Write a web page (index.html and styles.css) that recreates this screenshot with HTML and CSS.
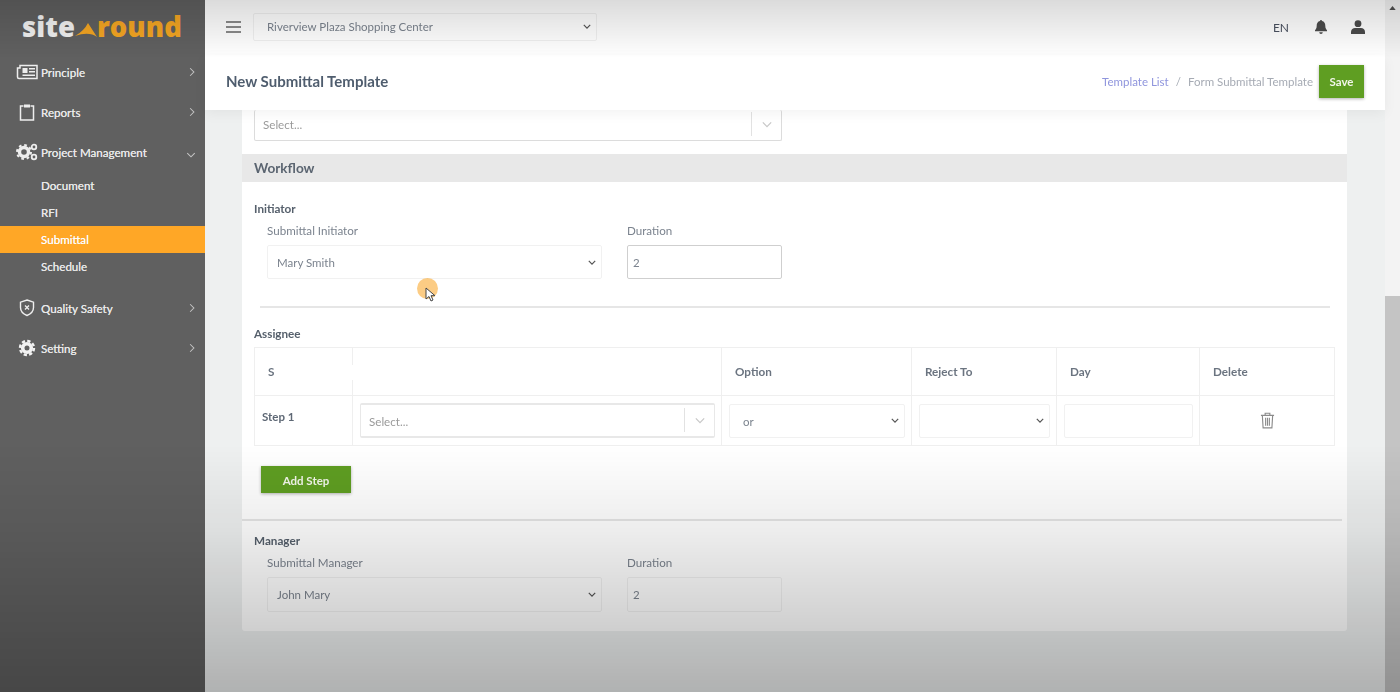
FILE: index.html
```html
<!DOCTYPE html>
<html lang="en">
<head>
  <meta charset="UTF-8">
  <title>New Submittal Template</title>
  <link rel="stylesheet" href="styles.css">
</head>
<body>
  <div class="page">
    <aside class="sidebar">
      <div class="logo">
        <span class="logo-site">site</span>
        <svg class="logo-arrow" viewBox="0 0 22 14"><path d="M13 0 L22 14 Q14 8 0 13 Q9 8 13 0 Z" fill="#f5a623"/></svg>
        <span class="logo-round">round</span>
      </div>
      <ul class="nav">
        <li class="nav-item">
          <svg class="nav-icon" viewBox="0 0 22 16"><path d="M4 1.500h17v13H3a1.500 1.500 0 0 1-1.500-1.500V4H4z" fill="none" stroke="#eee" stroke-width="1.500"/><path d="M6.500 4h5v5h-5zM13 4h6v1.500h-6zM13 7h6v1.500h-6zM6.500 10.500H19V12H6.500z" fill="#eee"/></svg>
          <span class="nav-text">Principle</span>
          <svg class="nav-chevron" viewBox="0 0 8 12"><path d="M1.500 1l5 5-5 5" fill="none" stroke="#c4c4c4" stroke-width="1.400"/></svg>
        </li>
        <li class="nav-item">
          <svg class="nav-icon" viewBox="0 0 22 18"><path d="M7.500 3H4.500v14h13V3h-3" fill="none" stroke="#eee" stroke-width="1.500"/><path d="M8 1.500h6v3H8z" fill="#eee"/></svg>
          <span class="nav-text">Reports</span>
          <svg class="nav-chevron" viewBox="0 0 8 12"><path d="M1.500 1l5 5-5 5" fill="none" stroke="#c4c4c4" stroke-width="1.400"/></svg>
        </li>
        <li class="nav-item">
          <svg class="nav-icon" viewBox="0 0 22 18"><circle cx="8" cy="9" r="4.500" fill="none" stroke="#eee" stroke-width="3.400"/><circle cx="8" cy="9" r="7" fill="none" stroke="#eee" stroke-width="2" stroke-dasharray="2.700 2.800"/><circle cx="18" cy="4" r="2.300" fill="none" stroke="#eee" stroke-width="1.800"/><circle cx="18" cy="14" r="2.300" fill="none" stroke="#eee" stroke-width="1.800"/></svg>
          <span class="nav-text">Project Management</span>
          <svg class="nav-chevron nav-chevron-open" viewBox="0 0 12 8"><path d="M1 1.500l5 5 5-5" fill="none" stroke="#c4c4c4" stroke-width="1.400"/></svg>
        </li>
        <li class="sub-item">Document</li>
        <li class="sub-item">RFI</li>
        <li class="sub-item sub-active">Submittal</li>
        <li class="sub-item">Schedule</li>
        <li class="nav-item nav-gap">
          <svg class="nav-icon" viewBox="0 0 22 18"><path d="M11 1l6.500 2.200v5.300c0 3.800-2.800 6.500-6.500 8-3.700-1.500-6.500-4.200-6.500-8V3.200z" fill="none" stroke="#eee" stroke-width="1.400"/><path d="M9 6.500l4 4M13 6.500l-4 4" stroke="#eee" stroke-width="1.300"/></svg>
          <span class="nav-text">Quality Safety</span>
          <svg class="nav-chevron" viewBox="0 0 8 12"><path d="M1.500 1l5 5-5 5" fill="none" stroke="#c4c4c4" stroke-width="1.400"/></svg>
        </li>
        <li class="nav-item">
          <svg class="nav-icon" viewBox="0 0 22 18"><circle cx="11" cy="9" r="4.300" fill="none" stroke="#f2f2f2" stroke-width="3.600"/><circle cx="11" cy="9" r="7" fill="none" stroke="#f2f2f2" stroke-width="2.400" stroke-dasharray="3.300 2.200"/></svg>
          <span class="nav-text">Setting</span>
          <svg class="nav-chevron" viewBox="0 0 8 12"><path d="M1.500 1l5 5-5 5" fill="none" stroke="#c4c4c4" stroke-width="1.400"/></svg>
        </li>
      </ul>
    </aside>

    <div class="main">
      <header class="topbar">
        <svg class="burger" viewBox="0 0 15 12"><path d="M0 1h15M0 6h15M0 11h15" stroke="#666" stroke-width="1.300"/></svg>
        <select class="field project-select"><option>Riverview Plaza Shopping Center</option></select>
        <div class="top-right">
          <span class="lang">EN</span>
          <svg class="top-icon" viewBox="0 0 14 14"><path d="M7 0a1 1 0 0 1 1 1.100c2.300.5 3.300 2.300 3.300 4.600 0 2.500.9 3.600 1.700 4.500v1H1v-1c.8-.9 1.700-2 1.700-4.500 0-2.300 1-4.100 3.300-4.600A1 1 0 0 1 7 0zM5.200 12.300h3.600A1.800 1.800 0 0 1 7 14a1.800 1.800 0 0 1-1.800-1.700z" fill="#4c4c4c"/></svg>
          <svg class="top-icon" viewBox="0 0 14 14"><circle cx="7" cy="3.700" r="3.400" fill="#4c4c4c"/><path d="M0 14v-2.200C0 9.500 2 8 4 8h6c2 0 4 1.500 4 3.800V14z" fill="#4c4c4c"/></svg>
        </div>
      </header>
      <div class="titlebar">
        <h1 class="page-title">New Submittal Template</h1>
        <div class="breadcrumb">
          <a class="crumb-link" href="#">Template List</a>
          <span class="crumb-sep">/</span>
          <span class="crumb-current">Form Submittal Template</span>
        </div>
        <button class="btn btn-save">Save</button>
      </div>

      <div class="content">
        <div class="card">
          <div class="picker picker-clipped">
            <span class="picker-text">Select...</span>
            <span class="picker-arrow"><svg viewBox="0 0 12 8"><path d="M1 1.500l5 5 5-5" fill="none" stroke="#c8c8c8" stroke-width="1.500"/></svg></span>
          </div>

          <div class="section-head">Workflow</div>

          <div class="group group-initiator">
            <div class="group-title">Initiator</div>
            <div class="group-row">
              <div class="form-col col-wide">
                <label class="form-label">Submittal Initiator</label>
                <select class="field"><option>Mary Smith</option></select>
              </div>
              <div class="form-col col-small">
                <label class="form-label">Duration</label>
                <input class="field field-focus" value="2">
              </div>
            </div>
          </div>

          <hr class="divider divider-inner">

          <div class="group-title assignee-title">Assignee</div>
          <table class="steps">
            <thead>
              <tr>
                <th class="c-step">S</th>
                <th class="c-user"></th>
                <th class="c-option">Option</th>
                <th class="c-reject">Reject To</th>
                <th class="c-day">Day</th>
                <th class="c-delete">Delete</th>
              </tr>
            </thead>
            <tbody>
              <tr>
                <td class="step-name">Step 1</td>
                <td>
                  <div class="picker">
                    <span class="picker-text">Select...</span>
                    <span class="picker-arrow"><svg viewBox="0 0 12 8"><path d="M1 1.500l5 5 5-5" fill="none" stroke="#c8c8c8" stroke-width="1.500"/></svg></span>
                  </div>
                </td>
                <td><select class="field field-cell"><option>or</option></select></td>
                <td><select class="field field-cell"><option></option></select></td>
                <td><input class="field field-cell"></td>
                <td class="delete-cell">
                  <svg class="trash" viewBox="0 0 16 18"><path d="M1 3.500h14M5.500 3V1.200h5V3M2.500 3.500l.8 13.300h9.400l.8-13.300M6 6v8.500M8 6v8.500M10 6v8.500" fill="none" stroke="#8b8b8b" stroke-width="1.200"/></svg>
                </td>
              </tr>
            </tbody>
          </table>

          <button class="btn btn-add">Add Step</button>

          <hr class="divider divider-outer">

          <div class="group">
            <div class="group-title">Manager</div>
            <div class="group-row">
              <div class="form-col col-wide">
                <label class="form-label">Submittal Manager</label>
                <select class="field field-tall"><option>John Mary</option></select>
              </div>
              <div class="form-col col-small">
                <label class="form-label">Duration</label>
                <input class="field field-tall" value="2">
              </div>
            </div>
          </div>
        </div>
      </div>
    </div>

    <div class="scrollbar">
      <svg class="scroll-up" viewBox="0 0 8 5"><path d="M4 0l4 5H0z" fill="#505050"/></svg>
      <div class="scroll-thumb"></div>
    </div>
  </div>

  <div class="vignette"></div>
  <div class="cursor-dot"></div>
  <svg class="cursor" viewBox="0 0 12 16"><path d="M1 1v11l3-2.500 2 4.500 2-1-2-4.300h4z" fill="#fff" stroke="#444" stroke-width="1"/></svg>
</body>
</html>
```

FILE: styles.css
```css
*{margin:0; padding:0; box-sizing:border-box; list-style:none;}
html,body{height:692px; overflow:hidden;}
body{font-family:"Lato","Noto Sans",sans-serif; font-size:11.6px; color:#6b7480; background:#eef0f0;}
.page{display:flex; height:692px; filter:blur(0.35px);}

/* sidebar */
.sidebar{width:205px; flex:none; background:#606060; color:#e8e8e8;}
.logo{height:54px; display:flex; align-items:center; justify-content:center; padding-right:1px; font-family:"Open Sans",sans-serif; font-size:27.5px; font-weight:800; line-height:1;}
.logo-site{color:#f2f2f2;}
.logo-round{color:#f5a623;}
.logo-arrow{width:22px; height:14px; margin-top:6px;}
.nav-item{height:40px; display:flex; align-items:center; padding:0 9px 0 16px; font-size:11.6px;}
.nav-icon{width:22px; height:18px; flex:none;}
.nav-text{margin-left:3px; flex:1; text-shadow:0 0 .4px #e8e8e8;}
.nav-chevron{width:6px; height:10px; margin-right:1px;}
.nav-chevron-open{width:10px; height:6px; margin:5px 0 0;}
.nav-item:first-child{margin-top:-2px;}
.sub-item{height:27px; line-height:28px; padding-left:41px; font-size:11.6px; text-shadow:0 0 .4px #e8e8e8;}
.sub-active{background:#ffa726; color:#fff;}
.nav-gap{margin-top:8px;}

/* top */
.main{flex:1; min-width:0; display:flex; flex-direction:column;}
.topbar{height:55px; flex:none; background:#fff; display:flex; align-items:center; padding:0 20px 2px 21px; position:relative; z-index:2;}
.burger{width:15px; height:12px; flex:none; margin-right:12px;}
.top-right{margin-left:auto; display:flex; align-items:center;}
.lang{font-size:12px; color:#4a5160; margin-right:25px; margin-top:2px;}
.top-icon{width:14px; height:14px; margin-left:23px;}
.top-icon:first-of-type{margin-left:0;}
.titlebar{height:55px; flex:none; background:#fff; display:flex; align-items:center; padding:0 21px 2px; position:relative; z-index:2; box-shadow:0 4px 12px rgba(0,0,0,.05);}
.page-title{font-size:15px; font-weight:700; color:#4f5d6e; flex:1; margin-bottom:2px;}
.breadcrumb{display:flex; gap:7px; margin:0 6px 1px 0; font-size:11.5px;}
.crumb-link{color:#8f95dd; text-decoration:none;}
.crumb-sep,.crumb-current{color:#a6abb4;}
.btn{background:#5f9e22; color:#f2f6ea; border:0; font:700 11.5px "Lato",sans-serif; box-shadow:0 1px 3px rgba(0,0,0,.3);}
.btn-save{width:45px; height:33px; padding-bottom:1px;}

/* form card */
.content{flex:1; padding:0 38px 0 37px; min-height:0;}
.card{background:#fff; height:521px; padding-top:0; border-radius:0 0 3px 3px; display:flow-root;}
.section-head{height:28px; line-height:28px; margin-top:13px; padding-left:12px; background:#e8e8e8; font-size:13.6px; font-weight:700; color:#5a6470;}
.group-initiator{margin-top:18px;}
.group-title{padding-left:12px; font-size:11.7px; font-weight:700; color:#56606c; line-height:16px;}
.group-row{display:flex; gap:25px; padding-left:25px; margin-top:7px;}
.form-label{display:block; line-height:16px; margin-bottom:6px; color:#7b838e;}
.col-wide{width:335px;}
.col-small{width:155px;}
.field{display:block; width:100%; height:34px; border:1px solid #f1f1f1; background:transparent; border-radius:2px; font:11.5px "Lato",sans-serif; color:#7b838e; padding:0 5px; outline:0;}
select.field{appearance:none; padding-left:9px; background:url("data:image/svg+xml,%3Csvg xmlns='http://www.w3.org/2000/svg' viewBox='0 0 10 6'%3E%3Cpath d='M1 1l4 4 4-4' fill='none' stroke='%23555' stroke-width='1.500'/%3E%3C/svg%3E") no-repeat right 5px center / 8px 5px;}
select.project-select{width:344px; height:28px; padding-left:13px;}
.field-focus{border-color:#cfcfcf;}
.field-tall{height:35px;}

.divider{border:0; background:#e6e6e6; height:2px;}
.divider-inner{margin:27px 17px 0 18px;}
.assignee-title{margin-top:17px;}
.steps{border-collapse:collapse; table-layout:fixed; width:1080px; margin:6px 0 0 12px; background:#fff;}
.steps th,.steps td{border:1px solid #efefef;}
.steps th{height:48px; text-align:left; padding:0 0 2px 13px; font-size:11.7px; font-weight:700; color:#6b7480;}
.steps td{height:50px; padding:0 6px 0 7px;}
.c-step{width:98px; position:relative;}
.c-step::after{content:""; position:absolute; right:-1px; top:17px; height:15px; width:2px; background:#fff;}
.c-user{width:369px;}
.c-option{width:190px;}
.c-reject{width:145px;}
.c-day{width:143px;}
.c-delete{width:135px;}
.step-name{font-weight:700; font-size:11.5px; color:#5e6875; vertical-align:top; padding-top:14px !important;}
.field-cell{height:34px;}
.steps select.field-cell{padding:2px 0 0 13px;}
.delete-cell{text-align:center;}
.trash{width:15px; height:17px; display:inline-block; vertical-align:middle;}

.picker{display:flex; align-items:center; height:35px; margin-top:-1px; border:1px solid #e8e8e8; border-width:2px 1px; border-radius:2px; background:#fff;}
.picker-text{flex:1; padding:2px 0 0 8px; color:#9a9a9a;}
.picker-arrow{width:30px; height:24px; border-left:1px solid #e2e2e2; display:flex; align-items:center; justify-content:center;}
.picker-arrow svg{width:10px; height:7px;}
.picker-clipped{width:528px; height:31px; margin:0 0 0 12px; padding-bottom:2px; border-top:0; border-bottom:1px solid #dcdcdc; border-left:1px solid #dcdcdc; border-right:1px solid #dcdcdc;}
.picker-clipped .picker-text{padding-top:0;}

.btn-add{display:block; width:90px; height:27px; margin:20px 0 0 19px; padding-top:2px;}
.divider-outer{margin:26px 5px 0 0;}
.divider-outer + .group{margin-top:11px;}

/* scrollbar */
.scrollbar{width:15px; flex:none; background:#f3f3f3; position:relative;}
.scroll-up{display:block; width:7px; height:4px; margin:6px auto 0;}
.scroll-thumb{position:absolute; left:0; right:0; top:296px; bottom:0; background:#c4c4c4;}

/* overlays: video fade and pointer highlight */
.vignette{position:fixed; inset:0; pointer-events:none; z-index:5; background:linear-gradient(to bottom,rgba(0,0,0,.14) 0,rgba(0,0,0,0) 58px,rgba(0,0,0,0) 445px,rgba(0,0,0,.07) 530px,rgba(0,0,0,.2) 640px,rgba(0,0,0,.26) 692px);}
.cursor-dot{position:absolute; left:417px; top:278px; width:21px; height:21px; border-radius:50%; background:rgba(250,170,50,.6); z-index:6; filter:blur(0.5px);}
.cursor{position:absolute; left:425px; top:287px; width:12px; height:16px; z-index:7;}
```
